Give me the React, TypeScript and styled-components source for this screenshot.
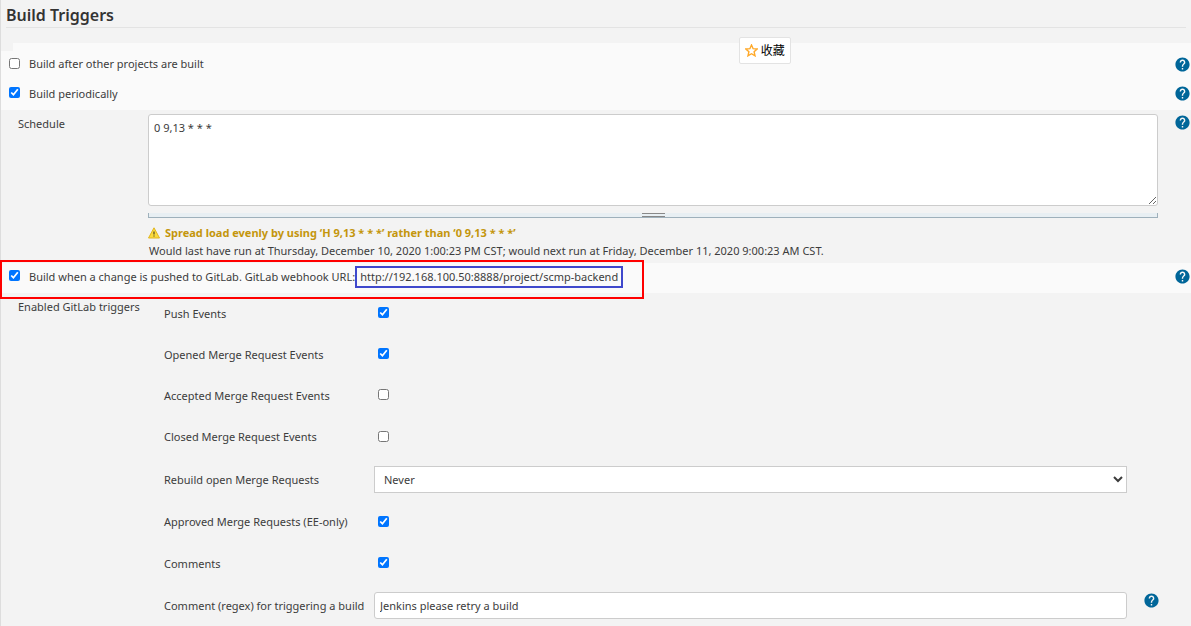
import React, { useState } from "react";
import styled, { createGlobalStyle } from "styled-components";
import { MdHelp } from "react-icons/md";

const GlobalStyle = createGlobalStyle`
  * { box-sizing: border-box; }
  body {
    margin: 0;
    background: #f3f3f3;
    color: #3c3c3c;
    font-family: "Noto Sans", "Open Sans", "Noto Sans CJK SC", sans-serif;
    font-size: 11px;
    line-height: 16px;
  }
`;

const Page = styled.main`
  position: relative;
  min-height: 100vh;
  border-left: 1px solid #ddd;
`;

const SectionTitle = styled.h1`
  margin: 0 5px;
  padding: 3px 0 0;
  height: 28px;
  border-bottom: 1px solid #e3e3e3;
  color: #333;
  font-size: 16px;
  line-height: 24px;
  font-weight: 600;
`;

const BandEdge = styled.div`
  height: 8px;
  margin: 15px 0 0 12px;
  background: #fafafa;
`;

const OptionRow = styled.div<{ $height: number }>`
  position: relative;
  display: flex;
  align-items: center;
  height: ${(p) => p.$height}px;
  padding: 0 0 3px 8px;
  background: #fafafa;
`;

const OptionLabel = styled.label`
  flex: 1;
  display: flex;
  align-items: center;
  gap: 9px;
  white-space: nowrap;
`;

const Checkbox = styled.input.attrs({ type: "checkbox" })`
  flex: none;
  width: 11px;
  height: 11px;
  margin: 0 0 2px;
  accent-color: #0075ff;
`;

const HelpButton = styled.button`
  flex: none;
  display: flex;
  width: 17px;
  height: 17px;
  padding: 0;
  border: 0;
  background: none;
  color: #069;
  cursor: pointer;
`;

const FieldRow = styled.div`
  display: grid;
  grid-template-columns: 130px minmax(0, 1fr) 16px 17px;
  align-items: start;
  padding: 4px 0 4px 17px;
`;

const FieldName = styled.label`
  padding-top: 2px;
  white-space: nowrap;
`;

const FieldHelp = styled.div`
  grid-column: 4;
`;

const ScheduleInput = styled.textarea`
  display: block;
  width: 100%;
  height: 92px;
  padding: 5px;
  border: 1px solid #ccc;
  border-radius: 3px;
  background: #fff;
  color: #3c3c3c;
  font: inherit;
  resize: vertical;
`;

const ResizeBar = styled.div`
  display: flex;
  justify-content: center;
  height: 5px;
  margin: 7px 0;
  border: 1px solid #9eb0bb;
  border-top: 0;
  background: #e8eff3;
`;

const ResizeGrip = styled.div`
  width: 23px;
  height: 4px;
  border: solid #888;
  border-width: 1px 0;
`;

const Warning = styled.p`
  display: flex;
  align-items: center;
  gap: 5px;
  margin: 0;
  height: 16px;
  color: #c4960c;
  font-weight: 700;
`;

const RunInfo = styled.p`
  margin: 2px 0 0 1px;
`;

const Highlight = styled.div`
  position: absolute;
  top: -3px;
  left: -1px;
  width: 644px;
  height: 39px;
  border: 2px solid #f00;
  pointer-events: none;
`;

const HookText = styled.span`
  display: flex;
  align-items: center;
`;

const HookUrl = styled.span`
  height: 22px;
  padding: 1px 3px;
  border: 2px solid #3f48cc;
`;

const TriggerList = styled.div`
  grid-column: 2 / 5;
  margin-top: -4px;
  padding-left: 16px;
`;

const TriggerRow = styled.div<{ $height: number }>`
  display: grid;
  grid-template-columns: 210px minmax(0, 1fr) 16px 17px 31px;
  align-items: center;
  height: ${(p) => p.$height}px;
`;

const TriggerName = styled.label`
  white-space: nowrap;
`;

const TriggerCheck = styled(Checkbox)`
  margin-left: 4px;
`;

const TriggerHelp = styled.div`
  grid-column: 4;
  align-self: start;
  padding-top: 8px;
`;

const Select = styled.select`
  width: 100%;
  height: 27px;
  padding: 0 5px;
  border: 1px solid #ccc;
  background: #fff;
  color: #3c3c3c;
  font: inherit;
`;

const TextInput = styled.input`
  width: 100%;
  height: 27px;
  padding: 0 5px;
  border: 1px solid #ccc;
  border-radius: 3px;
  background: #fff;
  color: #3c3c3c;
  font: inherit;
`;

const FavoriteButton = styled.button`
  position: absolute;
  top: 37px;
  left: 62%;
  display: flex;
  align-items: center;
  gap: 3px;
  height: 27px;
  padding: 0 5px;
  border: 1px solid #e3e3e3;
  border-radius: 2px;
  background: #fff;
  color: #000;
  font: inherit;
  font-size: 12px;
`;

const Help = ({ topic }: { topic: string }) => (
  <HelpButton type="button" aria-label={`Help for ${topic}`}>
    <MdHelp size={17} />
  </HelpButton>
);

const WarningIcon = () => (
  <svg width="12" height="12" viewBox="0 0 12 12" aria-hidden="true">
    <path d="M6 .8 11.5 11H.5Z" fill="#fbdb3c" stroke="#e0b520" strokeLinejoin="round" />
    <path d="M6 4.4v3M6 8.4v1" stroke="#4a4220" strokeWidth="1.2" />
  </svg>
);

const StarIcon = () => (
  <svg width="13" height="13" viewBox="0 0 13 13" aria-hidden="true">
    <path
      d="M6.5 1 8.1 4.7 12.1 5 9.1 7.7 10 11.8 6.5 9.7 3 11.8 3.9 7.7.9 5 4.9 4.7Z"
      fill="none"
      stroke="#ffa929"
      strokeWidth="1.4"
    />
  </svg>
);

type Trigger = { id: string; label: string; checked?: boolean; kind?: "select" | "text"; height: number };

const triggers: Trigger[] = [
  { id: "push", label: "Push Events", checked: true, height: 41 },
  { id: "opened", label: "Opened Merge Request Events", checked: true, height: 41 },
  { id: "accepted", label: "Accepted Merge Request Events", checked: false, height: 41 },
  { id: "closed", label: "Closed Merge Request Events", checked: false, height: 42 },
  { id: "rebuild", label: "Rebuild open Merge Requests", kind: "select", height: 43 },
  { id: "approved", label: "Approved Merge Requests (EE-only)", checked: true, height: 42 },
  { id: "comments", label: "Comments", checked: true, height: 41 },
  { id: "regex", label: "Comment (regex) for triggering a build", kind: "text", height: 43 },
];

export default function App() {
  const [schedule, setSchedule] = useState("0 9,13 * * *");

  return (
    <>
      <GlobalStyle />
      <Page>
        <SectionTitle>Build Triggers</SectionTitle>
        <BandEdge />
        <OptionRow $height={29}>
          <OptionLabel>
            <Checkbox />
            Build after other projects are built
          </OptionLabel>
          <Help topic="Build after other projects are built" />
        </OptionRow>
        <OptionRow $height={30}>
          <OptionLabel>
            <Checkbox defaultChecked />
            Build periodically
          </OptionLabel>
          <Help topic="Build periodically" />
        </OptionRow>
        <FieldRow>
          <FieldName htmlFor="schedule">Schedule</FieldName>
          <div>
            <ScheduleInput id="schedule" value={schedule} onChange={(e) => setSchedule(e.target.value)} />
            <ResizeBar>
              <ResizeGrip />
            </ResizeBar>
            <Warning>
              <WarningIcon />
              Spread load evenly by using ‘H 9,13 * * *’ rather than ‘0 9,13 * * *’
            </Warning>
            <RunInfo>
              Would last have run at Thursday, December 10, 2020 1:00:23 PM CST; would next run at Friday, December 11,
              2020 9:00:23 AM CST.
            </RunInfo>
          </div>
          <FieldHelp>
            <Help topic="Schedule" />
          </FieldHelp>
        </FieldRow>
        <OptionRow $height={30}>
          <OptionLabel>
            <Checkbox defaultChecked />
            <HookText>
              Build when a change is pushed to GitLab. GitLab webhook URL:
              <HookUrl>http://192.168.100.50:8888/project/scmp-backend</HookUrl>
            </HookText>
          </OptionLabel>
          <Help topic="GitLab webhook" />
          <Highlight />
        </OptionRow>
        <FieldRow>
          <FieldName as="span">Enabled GitLab triggers</FieldName>
          <TriggerList>
            {triggers.map((t) => (
              <TriggerRow key={t.id} $height={t.height}>
                <TriggerName htmlFor={t.id}>{t.label}</TriggerName>
                {t.kind === "select" ? (
                  <Select id={t.id}>
                    <option>Never</option>
                  </Select>
                ) : t.kind === "text" ? (
                  <TextInput id={t.id} type="text" defaultValue="Jenkins please retry a build" />
                ) : (
                  <TriggerCheck id={t.id} defaultChecked={t.checked} />
                )}
                {t.kind === "text" && (
                  <TriggerHelp>
                    <Help topic={t.label} />
                  </TriggerHelp>
                )}
              </TriggerRow>
            ))}
          </TriggerList>
        </FieldRow>
        <FavoriteButton type="button">
          <StarIcon />
          收藏
        </FavoriteButton>
      </Page>
    </>
  );
}
